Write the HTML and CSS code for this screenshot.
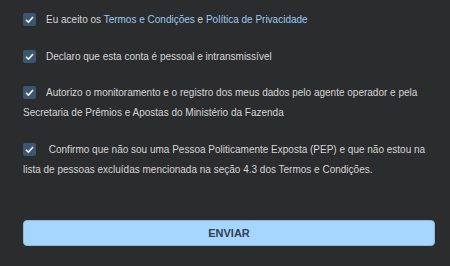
FILE: index.html
```html
<!DOCTYPE html>
<html lang="pt-BR">
<head>
    <meta charset="UTF-8">
    <title>Termos</title>
    <link rel="stylesheet" href="styles.css">
</head>
<body>
    <form class="terms">
        <label class="term">
            <span class="check"><svg viewBox="0 0 13 13"><path d="M3 6.8 L5.4 9.2 L10 4"/></svg></span>Eu aceito os <a href="#">Termos e Condições</a> e <a href="#">Política de Privacidade</a>
        </label>
        <label class="term">
            <span class="check"><svg viewBox="0 0 13 13"><path d="M3 6.8 L5.4 9.2 L10 4"/></svg></span>Declaro que esta conta é pessoal e intransmissível
        </label>
        <label class="term">
            <span class="check"><svg viewBox="0 0 13 13"><path d="M3 6.8 L5.4 9.2 L10 4"/></svg></span>Autorizo o monitoramento e o registro dos meus dados pelo agente operador e pela Secretaria de Prêmios e Apostas do Ministério da Fazenda
        </label>
        <label class="term">
            <span class="check"><svg viewBox="0 0 13 13"><path d="M3 6.8 L5.4 9.2 L10 4"/></svg></span> Confirmo que não sou uma Pessoa Politicamente Exposta (PEP) e que não estou na lista de pessoas excluídas mencionada na seção 4.3 dos Termos e Condições.
        </label>
        <button type="button" class="submit">ENVIAR</button>
    </form>
</body>
</html>
```

FILE: styles.css
```css
body {
    margin: 0;
    background-color: #2b2c2e;
    font-family: Arial, 'Liberation Sans', sans-serif;
    color: #d6d6d6;
    font-size: 10px;
}
.terms {
    padding: 10px 15px 0 23px;
}
.term {
    display: block;
    line-height: 20px;
    margin-bottom: 16.5px;
}
.term a {
    color: #9ec8ee;
    text-decoration: none;
}
.check {
    display: inline-block;
    width: 13px;
    height: 13px;
    background-color: #3c5672;
    border-radius: 2px;
    vertical-align: -3px;
    margin-right: 10px;
}
.check svg {
    display: block;
    width: 13px;
    height: 13px;
}
.check path {
    fill: none;
    stroke: #fff;
    stroke-width: 1.6;
}
.submit {
    display: block;
    width: 100%;
    height: 26px;
    margin-top: 40.5px;
    background-color: #a6d6fd;
    border: 1px solid #8fb9dc;
    border-radius: 4px;
    color: #2f4152;
    font-family: Arial, 'Liberation Sans', sans-serif;
    font-weight: bold;
    font-size: 11px;
}
```
